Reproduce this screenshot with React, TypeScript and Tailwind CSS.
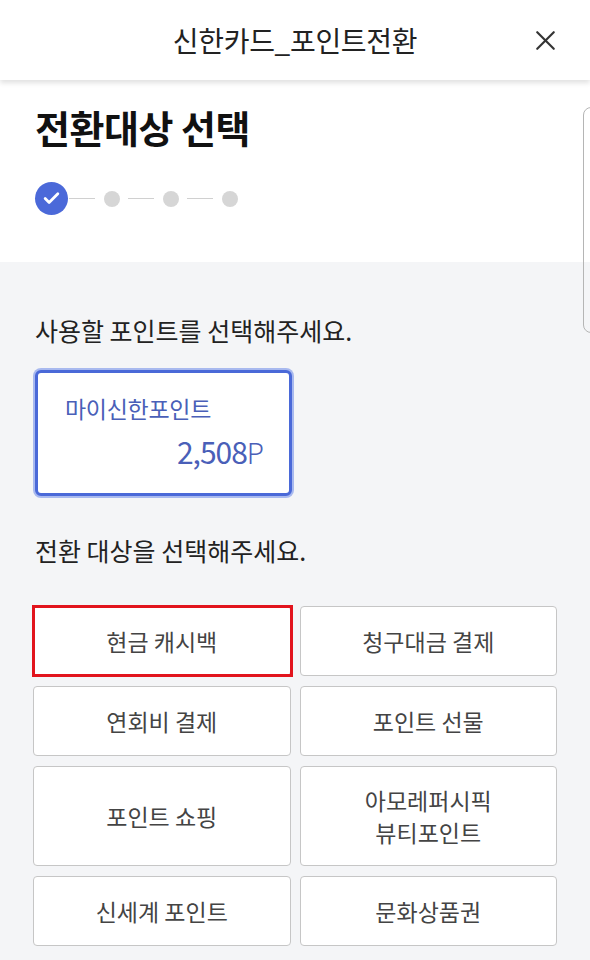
import { X, Check } from "lucide-react";

const targets = [
  { label: "현금 캐시백", selected: true },
  { label: "청구대금 결제" },
  { label: "연회비 결제" },
  { label: "포인트 선물" },
  { label: "포인트 쇼핑", tall: true },
  { label: "아모레퍼시픽\n뷰티포인트", tall: true },
  { label: "신세계 포인트" },
  { label: "문화상품권" },
];

const font = { fontFamily: '"Noto Sans CJK KR", "Noto Sans", sans-serif' };

const Stepper = () => (
  <div className="flex items-center">
    <div className="w-[33px] h-[33px] rounded-full bg-[#4b69d9] flex items-center justify-center">
      <Check className="w-[19px] h-[19px] text-white" strokeWidth={3.5} />
    </div>
    {[0, 1, 2].map((i) => (
      <div key={i} className="flex items-center">
        <div className={`w-[26px] h-px bg-[#d0d0d0] mr-[9px] ${i === 0 ? "ml-[1px]" : "ml-[8px]"}`} />
        <div className="w-[16px] h-[16px] rounded-full bg-[#d6d6d6]" />
      </div>
    ))}
  </div>
);

export default function App() {
  return (
    <div className="relative w-[590px] min-h-[960px] bg-[#f4f5f7] overflow-hidden" style={font}>
      <header className="relative z-10 h-[80px] bg-white flex items-center justify-center shadow-[0_3px_5px_rgba(0,0,0,0.12)]">
        <h1 className="text-[28px] text-[#222] tracking-[-0.3px]">신한카드_포인트전환</h1>
        <button className="absolute right-[28px] top-[24px] text-[#333]">
          <X className="w-[33px] h-[33px]" strokeWidth={1.6} />
        </button>
      </header>

      <section className="bg-white pt-[22px] pb-[47px] px-[35px]">
        <h2 className="text-[38px] leading-[50px] font-bold text-[#111] tracking-[-0.5px]">전환대상 선택</h2>
        <div className="mt-[30px]">
          <Stepper />
        </div>
      </section>

      <div className="absolute left-[583px] top-[107px] w-[20px] h-[226px] rounded-l-[8px] border-[1.5px] border-[#b5b5b5]" />

      <section className="pt-[52px] px-[33px] pb-[12px]">
        <p className="pl-[2px] text-[25px] leading-[32px] text-[#222]">사용할 포인트를 선택해주세요.</p>
        <div className="mt-[24px] ml-[2px] w-[257px] h-[126px] rounded-[6px] bg-white border-[3px] border-[#4a69d8] shadow-[0_0_0_2px_#a8b9ef] pt-[21px] pl-[27px] pr-[26px]">
          <p className="text-[23px] leading-[28px] text-[#4a5fb8] tracking-[-0.3px]">마이신한포인트</p>
          <p className="mt-[11px] text-right text-[30px] leading-[36px] text-[#4a5fb8] tracking-[-1px]">
            2,508<span className="font-light text-[28px]">P</span>
          </p>
        </div>

        <p className="mt-[38px] pl-[2px] text-[25px] leading-[32px] text-[#222]">전환 대상을 선택해주세요.</p>

        <div className="mt-[40px] grid grid-cols-2 gap-x-[9px] gap-y-[10px]">
          {targets.map((t) => (
            <button
              key={t.label}
              className={`relative ${t.tall ? "h-[100px]" : "h-[70px]"} border border-[#c6c6c6] rounded-[4px] bg-white flex items-center justify-center text-[23px] leading-[32px] text-[#444] whitespace-pre-line text-center`}
            >
              {t.label}
              {t.selected && (
                <span className="absolute -top-[2px] -left-[2px] -right-[3px] -bottom-[2px] border-[3px] border-[#e2141d]" />
              )}
            </button>
          ))}
        </div>
      </section>
    </div>
  );
}
